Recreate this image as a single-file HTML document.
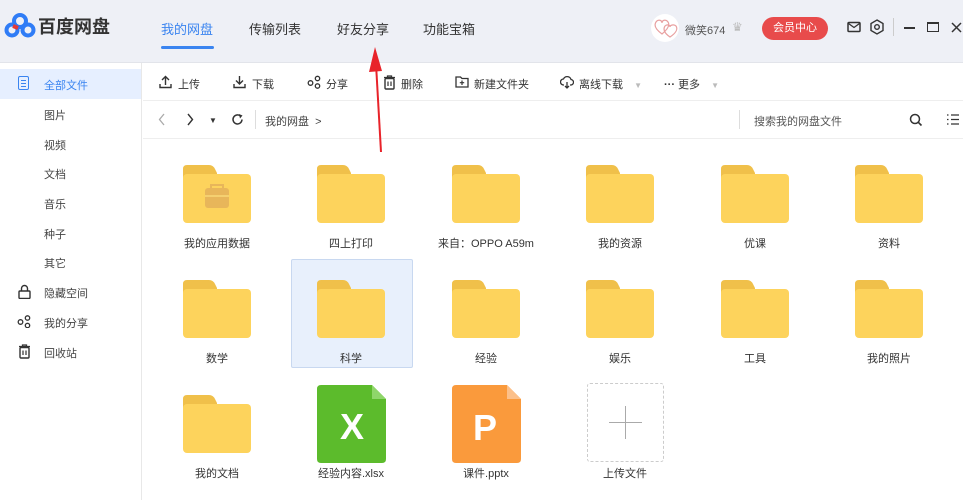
<!DOCTYPE html>
<html><head><meta charset="utf-8"><style>
*{margin:0;padding:0;box-sizing:border-box}
body{width:963px;height:500px;overflow:hidden;background:#fff;font-family:"Liberation Sans","Noto Sans CJK SC",sans-serif;position:relative;color:#333}
.a{position:absolute}
.hdr{left:0;top:0;width:963px;height:63px;background:#eef0f6;border-bottom:1px solid #e2e4ea}
.tab{top:19px;font-size:13px;color:#333}
.side{left:0;top:63px;width:142px;height:437px;background:#fff;border-right:1px solid #e8e8e8}
.si{left:44px;font-size:11px;color:#444}
.tb{top:76px;font-size:11px;color:#333}
.ic{position:absolute;top:75px}
.lbl{font-size:11px;color:#333;text-align:center;width:130px}
</style></head><body>
<div class="a hdr"></div>
<svg class="a" style="left:4px;top:11px" width="32" height="28" viewBox="0 0 32 28"><circle cx="16" cy="10" r="6" fill="none" stroke="#2f7cf6" stroke-width="4"/><circle cx="8" cy="19" r="5.5" fill="none" stroke="#2f7cf6" stroke-width="4"/><circle cx="24" cy="19" r="5.5" fill="none" stroke="#2f7cf6" stroke-width="4"/><path d="M9 15 L14 17" stroke="#e53935" stroke-width="4"/></svg>
<div class="a" style="left:38px;top:13px;font-size:18px;font-weight:bold;color:#333">百度网盘</div>
<div class="a tab" style="left:161px;color:#3a84f0">我的网盘</div>
<div class="a" style="left:161px;top:46px;width:53px;height:3px;background:#3a84f0;border-radius:2px"></div>
<div class="a tab" style="left:249px">传输列表</div>
<div class="a tab" style="left:337px">好友分享</div>
<div class="a tab" style="left:423px">功能宝箱</div>
<div class="a" style="left:651px;top:14px;width:28px;height:28px;border-radius:50%;background:#fff"></div>
<svg class="a" style="left:653px;top:18px" width="26" height="20"><path d="M9 16 C2 11 1 7 3 4 C5 1 9 2 9 5 C9 2 13 1 15 4 C17 7 15 11 9 16Z" fill="none" stroke="#e8a0a0" stroke-width="1.2"/><path d="M17 19 C11 15 10 11 12 8 C14 6 17 7 17 9 C17 7 21 6 23 8 C25 11 23 15 17 19Z" fill="none" stroke="#e8a0a0" stroke-width="1.2"/></svg>
<div class="a" style="left:685px;top:22px;font-size:11px;color:#555">微笑674</div>
<div class="a" style="left:732px;top:20px;font-size:12px;color:#bbb">♛</div>
<div class="a" style="left:762px;top:17px;width:66px;height:23px;border-radius:12px;background:#e84b4b;color:#fff;font-size:11px;text-align:center;line-height:23px">会员中心</div>
<svg class="a" style="left:847px;top:21px" width="14" height="12"><rect x="1" y="1.5" width="12" height="9" rx="1" fill="none" stroke="#333" stroke-width="1.5"/><path d="M1.5 2.5 L7 6.5 L12.5 2.5" fill="none" stroke="#333" stroke-width="1.3"/></svg>
<svg class="a" style="left:870px;top:19px" width="14" height="16"><path d="M7 1 L13 4.5 V11.5 L7 15 L1 11.5 V4.5Z" fill="none" stroke="#333" stroke-width="1.4"/><circle cx="7" cy="8" r="2.3" fill="none" stroke="#333" stroke-width="1.4"/></svg>
<div class="a" style="left:893px;top:18px;width:1px;height:18px;background:#ccc"></div>
<div class="a" style="left:904px;top:27px;width:11px;height:1.5px;background:#333"></div>
<div class="a" style="left:927px;top:22px;width:12px;height:10px;border:1.5px solid #333;border-top-width:2px"></div>
<svg class="a" style="left:951px;top:22px" width="11" height="11"><path d="M1 1 L10 10 M10 1 L1 10" stroke="#333" stroke-width="1.5"/></svg>

<div class="a side"></div>
<div class="a" style="left:0;top:69px;width:141px;height:30px;background:#e6efff"></div>
<div class="a" style="left:18px;top:76px;width:11px;height:14px;border:1.5px solid #3a84f0;border-radius:2px"></div>
<div class="a" style="left:21px;top:80px;width:5px;height:1px;background:#3a84f0;box-shadow:0 3px 0 #3a84f0,0 6px 0 #3a84f0"></div>
<div class="a si" style="top:77px;color:#3a84f0">全部文件</div>
<div class="a si" style="top:107px">图片</div>
<div class="a si" style="top:137px">视频</div>
<div class="a si" style="top:166px">文档</div>
<div class="a si" style="top:196px">音乐</div>
<div class="a si" style="top:226px">种子</div>
<div class="a si" style="top:255px">其它</div>
<svg class="a" style="left:18px;top:284px" width="13" height="15"><path d="M3.5 7 V4.5 A3 3 0 0 1 9.5 4.5 V7" fill="none" stroke="#333" stroke-width="1.4"/><rect x="1" y="7" width="11" height="7.5" rx="1" fill="none" stroke="#333" stroke-width="1.4"/></svg>
<div class="a si" style="top:285px">隐藏空间</div>
<svg class="a" style="left:17px;top:315px" width="14" height="13"><circle cx="3.5" cy="7" r="2.3" fill="none" stroke="#333" stroke-width="1.3"/><circle cx="10.5" cy="3" r="2.2" fill="none" stroke="#333" stroke-width="1.3"/><circle cx="10.5" cy="10.5" r="2.2" fill="none" stroke="#333" stroke-width="1.3"/></svg>
<div class="a si" style="top:315px">我的分享</div>
<svg class="a" style="left:18px;top:344px" width="13" height="15"><path d="M1 2.5 H12 M4.5 2.5 V1 H8.5 V2.5" fill="none" stroke="#333" stroke-width="1.3"/><rect x="2" y="3.5" width="9" height="10.5" rx="1" fill="none" stroke="#333" stroke-width="1.4"/><path d="M5 6.5 V11 M8 6.5 V11" stroke="#333" stroke-width="1.2"/></svg>
<div class="a si" style="top:345px">回收站</div>

<div class="a" style="left:143px;top:100px;width:820px;height:1px;background:#eee"></div>
<div class="a" style="left:143px;top:138px;width:820px;height:1px;background:#eee"></div>
<svg class="ic" style="left:159px" width="13" height="14"><path d="M6.5 10 V2 M3 5 L6.5 1.5 L10 5 M1 9 V12.5 H12 V9" fill="none" stroke="#333" stroke-width="1.4"/></svg>
<div class="a tb" style="left:178px">上传</div>
<svg class="ic" style="left:233px" width="13" height="14"><path d="M6.5 1 V9 M3 5.5 L6.5 9 L10 5.5 M1 9 V12.5 H12 V9" fill="none" stroke="#333" stroke-width="1.4"/></svg>
<div class="a tb" style="left:252px">下载</div>
<svg class="ic" style="left:307px" width="14" height="14"><circle cx="3.5" cy="8" r="2.3" fill="none" stroke="#333" stroke-width="1.3"/><circle cx="10.5" cy="3.5" r="2.2" fill="none" stroke="#333" stroke-width="1.3"/><circle cx="10.5" cy="11" r="2.2" fill="none" stroke="#333" stroke-width="1.3"/></svg>
<div class="a tb" style="left:326px">分享</div>
<svg class="ic" style="left:383px" width="13" height="15"><path d="M1 2.5 H12 M4.5 2.5 V1 H8.5 V2.5" fill="none" stroke="#333" stroke-width="1.3"/><rect x="2" y="3.5" width="9" height="10.5" rx="1" fill="none" stroke="#333" stroke-width="1.4"/><path d="M5 6.5 V11 M8 6.5 V11" stroke="#333" stroke-width="1.2"/></svg>
<div class="a tb" style="left:401px">删除</div>
<svg class="ic" style="left:455px" width="14" height="13"><path d="M1 2 H5.5 L7 3.5 H13 V12 H1Z" fill="none" stroke="#333" stroke-width="1.3"/><path d="M7 5.5 V10 M4.8 7.7 H9.2" stroke="#333" stroke-width="1.2"/></svg>
<div class="a tb" style="left:474px">新建文件夹</div>
<svg class="ic" style="left:560px" width="14" height="14"><path d="M4 10 H3.5 A3 3 0 0 1 3.5 4 A4 4 0 0 1 11 4.5 A2.7 2.7 0 0 1 10.5 10 H10 M7 7 V13 M5 11 L7 13 L9 11" fill="none" stroke="#333" stroke-width="1.3"/></svg>
<div class="a tb" style="left:579px">离线下载 <span style="color:#bbb;font-size:8px;margin-left:8px">▼</span></div>
<div class="a tb" style="left:664px"><b>···</b> 更多 <span style="color:#bbb;font-size:8px;margin-left:8px">▼</span></div>
<svg class="a" style="left:158px;top:113px" width="8" height="13"><path d="M6 1 L1.5 6.5 L6 12" fill="none" stroke="#aaa" stroke-width="1.3"/></svg>
<svg class="a" style="left:186px;top:113px" width="8" height="13"><path d="M2 1 L6.5 6.5 L2 12" fill="none" stroke="#333" stroke-width="1.4"/></svg>
<div class="a" style="left:209px;top:116px;font-size:8px;color:#333">▼</div>
<svg class="a" style="left:231px;top:113px" width="13" height="13"><path d="M11 6.5 A4.5 4.5 0 1 1 9 2.7" fill="none" stroke="#333" stroke-width="1.5"/><path d="M8 1 L11.5 2.5 L9 5.5Z" fill="#333"/></svg>
<div class="a" style="left:255px;top:110px;width:1px;height:19px;background:#ddd"></div>
<div class="a" style="left:265px;top:113px;font-size:11px;color:#444">我的网盘 &nbsp;&gt;</div>
<div class="a" style="left:739px;top:110px;width:1px;height:19px;background:#ddd"></div>
<div class="a" style="left:754px;top:113px;font-size:11px;color:#555">搜索我的网盘文件</div>
<svg class="a" style="left:909px;top:113px" width="14" height="14"><circle cx="6" cy="6" r="4.5" fill="none" stroke="#333" stroke-width="1.5"/><path d="M9.3 9.3 L12.5 12.5" stroke="#333" stroke-width="1.6"/></svg>
<svg class="a" style="left:946px;top:113px" width="14" height="13"><path d="M1 2 H2.5 M1 6.5 H2.5 M1 11 H2.5 M5 2 H13 M5 6.5 H13 M5 11 H13" stroke="#333" stroke-width="1.3"/></svg>

<div class="a" style="left:291px;top:259px;width:122px;height:109px;background:#e8f0fc;border:1px solid #c8d8f0;border-radius:2px"></div>

<svg width="0" height="0" style="position:absolute"><defs><g id="f"><path d="M4 0 H26 Q30 0 32 4 L34 8 V20 H0 V4 Q0 0 4 0Z" fill="#f0c04a"/><rect x="0" y="9" width="68" height="49" rx="4" fill="#fdd35c"/></g></defs></svg>
<div id="grid"></div>
<script>
var cols=[217,351,486,620,755,889];
var rows=[[165,242],[280,357],[395,472]];
var names=[["我的应用数据","四上打印","来自：OPPO A59m","我的资源","优课","资料"],["数学","科学","经验","娱乐","工具","我的照片"],["我的文档"]];
var h="";
for(var r=0;r<3;r++)for(var c=0;c<names[r].length;c++){
var x=cols[c],y=rows[r][0];
h+='<svg class="a" style="left:'+(x-34)+'px;top:'+y+'px" width="68" height="58"><use href="#f"/>'+(r==0&&c==0?'<rect x="22" y="23" width="24" height="20" rx="3" fill="#e8b65a"/><rect x="22" y="30" width="24" height="2" fill="#f5d070"/><path d="M28 23 v-3 h12 v3" stroke="#e8b65a" stroke-width="2" fill="none"/>':'')+'</svg>';
h+='<div class="a lbl" style="left:'+(x-65)+'px;top:'+(rows[r][1]-7)+'px">'+names[r][c]+'</div>';}
h+='<svg class="a" style="left:317px;top:385px" width="69" height="78"><path d="M4 0 H55 L69 14 V74 Q69 78 65 78 H4 Q0 78 0 74 V4 Q0 0 4 0Z" fill="#5cbb2c"/><path d="M55 0 L69 14 H55Z" fill="#8fd66a"/><text x="35" y="54" font-size="36" font-weight="bold" fill="#fff" text-anchor="middle" font-family="Liberation Sans">X</text></svg>';
h+='<div class="a lbl" style="left:286px;top:465px">经验内容.xlsx</div>';
h+='<svg class="a" style="left:452px;top:385px" width="69" height="78"><path d="M4 0 H55 L69 14 V74 Q69 78 65 78 H4 Q0 78 0 74 V4 Q0 0 4 0Z" fill="#fa9a3c"/><path d="M55 0 L69 14 H55Z" fill="#fcc08a"/><text x="33" y="55" font-size="36" font-weight="bold" fill="#fff" text-anchor="middle" font-family="Liberation Sans">P</text></svg>';
h+='<div class="a lbl" style="left:421px;top:465px">课件.pptx</div>';
h+='<div class="a" style="left:587px;top:383px;width:77px;height:79px;border:1px dashed #ccc;border-radius:3px"></div><div class="a" style="left:609px;top:422px;width:33px;height:1px;background:#aaa"></div><div class="a" style="left:625px;top:406px;width:1px;height:33px;background:#aaa"></div>';
h+='<div class="a lbl" style="left:560px;top:465px">上传文件</div>';
document.getElementById("grid").innerHTML=h;
</script>
<svg class="a" style="left:365px;top:44px" width="26" height="112"><line x1="16" y1="108" x2="11" y2="20" stroke="#e8232a" stroke-width="2"/><path d="M10 3 L4 28 L17 27Z" fill="#e8232a"/></svg>
</body></html>
